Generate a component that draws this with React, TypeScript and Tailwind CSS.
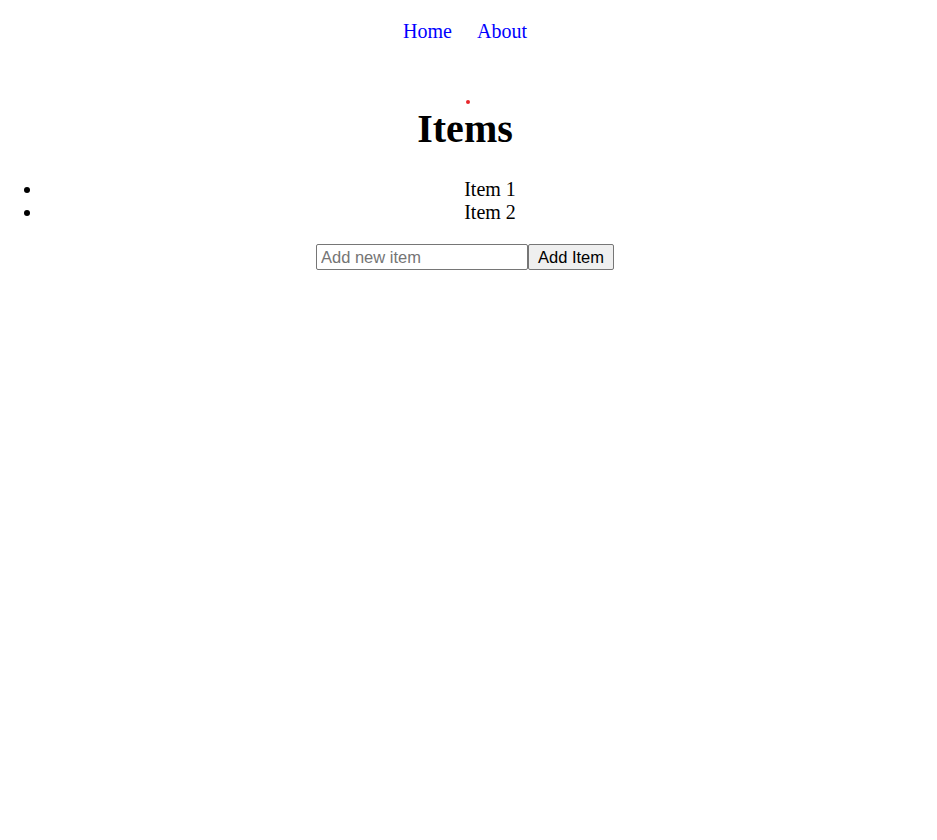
import * as React from "react";

const App: React.FC = () => {
  const [items, setItems] = React.useState<string[]>(["Item 1", "Item 2"]);
  const [draft, setDraft] = React.useState("");

  const addItem = (e: React.FormEvent) => {
    e.preventDefault();
    if (!draft.trim()) return;
    setItems([...items, draft.trim()]);
    setDraft("");
  };

  return (
    <div className="min-h-screen bg-white text-center text-[20px] leading-[23px] text-black font-['Liberation_Serif',serif]">
      {/* nav */}
      <nav className="flex h-[76px] justify-center gap-[25px] pt-[20px] pr-[7px]">
        <a href="#" className="text-[#0000ff]">
          Home
        </a>
        <a href="#" className="text-[#0000ff]">
          About
        </a>
      </nav>

      <div className="relative pt-[30px]">
        {/* red status dot */}
        <span className="absolute left-[466px] top-[24px] h-[4px] w-[4px] rounded-full bg-[#e8262b]" />
        <h1 className="mb-[26px] pr-[7px] text-[40px] leading-[46px] font-bold">
          Items
        </h1>
      </div>

      <ul className="list-disc pl-[43px]">
        {items.map(item => (
          <li key={item}>{item}</li>
        ))}
      </ul>

      <form onSubmit={addItem} className="mt-[20px] flex justify-center pr-[7px]">
        <input
          value={draft}
          onChange={e => setDraft(e.target.value)}
          placeholder="Add new item"
          className="h-[26px] w-[212px] border border-[#767676] px-[4px] text-[16.5px] font-['Liberation_Sans',sans-serif] placeholder:text-[#757575] rounded-[2px]"
        />
        <button
          type="submit"
          className="h-[26px] w-[86px] rounded-[2px] border border-[#767676] bg-[#efefef] text-[16.5px] font-['Liberation_Sans',sans-serif]"
        >
          Add Item
        </button>
      </form>
    </div>
  );
};

export default App;
